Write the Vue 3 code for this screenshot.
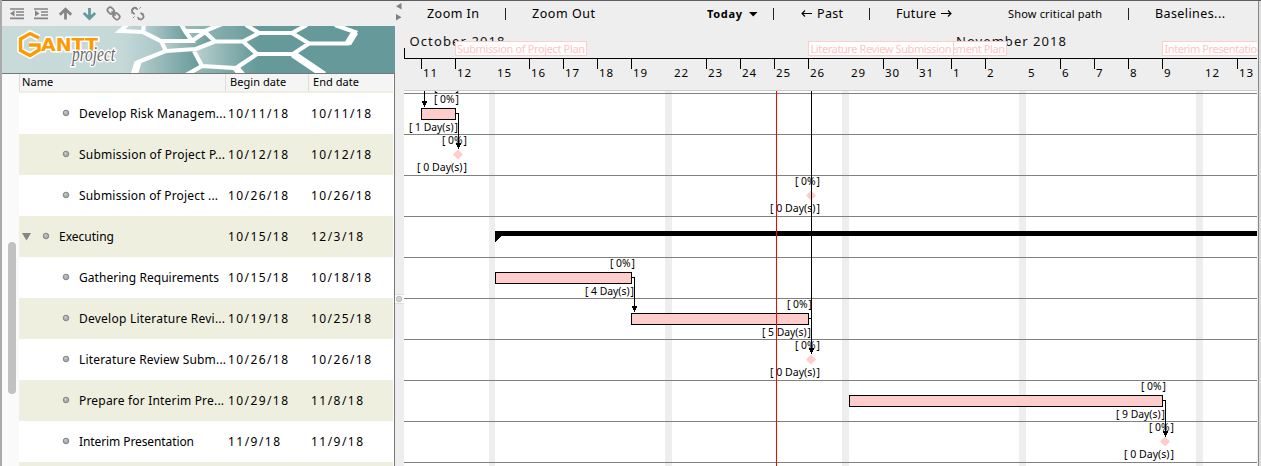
<script setup>
const rows = [
  { name: 'Develop Risk Managem...', w: 147, begin: '10/11/18', end: '10/11/18' },
  { name: 'Submission of Project P...', w: 146, begin: '10/12/18', end: '10/12/18' },
  { name: 'Submission of Project ...', w: 139, begin: '10/26/18', end: '10/26/18' },
  { name: 'Executing', w: 55, begin: '10/15/18', end: '12/3/18', parent: true },
  { name: 'Gathering Requirements', w: 140, begin: '10/15/18', end: '10/18/18' },
  { name: 'Develop Literature Revi...', w: 146, begin: '10/19/18', end: '10/25/18' },
  { name: 'Literature Review Subm...', w: 147, begin: '10/26/18', end: '10/26/18' },
  { name: 'Prepare for Interim Pre...', w: 145, begin: '10/29/18', end: '11/8/18' },
  { name: 'Interim Presentation', w: 115, begin: '11/9/18', end: '11/9/18' },
]
const dateWidth = (d) => (d.length === 8 ? 60 : 52)
const tools = [
  { t: 'Zoom In', w: 52, c: 'a' }, { sep: true, c: 'b' }, { t: 'Zoom Out', w: 63, c: 'c' },
  { t: 'Today', w: 35, c: 'd', bold: true }, { sep: true, c: 'e' }, { t: 'Past', w: 26, c: 'f', back: true },
  { sep: true, c: 'g' }, { t: 'Future', w: 40, c: 'h', next: true }, { t: 'Show critical path', w: 94, c: 'i', small: true },
  { sep: true, c: 'j' }, { t: 'Baselines...', w: 70, c: 'k' },
]
const days = [
  [421, 11], [455, 12], [495, 15, 1], [529, 16], [563, 17], [597, 18], [631, 19], [672, 22, 1],
  [706, 23], [740, 24], [774, 25], [808, 26], [849, 29, 1], [883, 30], [917, 31], [951, 1],
  [985, 2], [1026, 5, 1], [1060, 6], [1094, 7], [1128, 8], [1162, 9], [1203, 12, 1], [1237, 13],
]
const weekends = [[489, 6], [665, 7], [842, 7], [1019, 7], [1196, 7]]
const lines = Array.from({ length: 10 }, (_, i) => 93 + i * 41)
const bars = [[421, 108, 34], [495, 272, 136], [631, 313, 177], [849, 395, 313]]
const percents = [[434, 91], [434, 103], [442, 144], [795, 185], [610, 267], [787, 308], [795, 349], [1141, 390], [1149, 431]]
const durations = [
  [409, 131, 1, 49], [417, 171, 0, 50], [770, 212, 0, 50], [585, 295, 4, 49],
  [762, 336, 5, 49], [770, 376, 0, 50], [1116, 418, 9, 49], [1124, 458, 0, 50],
]
const diamonds = [[458, 154.5], [811, 195.5], [811, 359.5], [1165, 441.5]]
const arrows = [[424, 107], [458, 149], [634, 312], [811, 354], [1165, 437]]
const hexes = 'M128 24L120 31L143 32L161 41L166 51L138 62L134 75 M144 24L143 32 M161 41H192L185 31L181 24 M185 31H205L222 24 M192 41L205 32L215 41.5H243L259 33L246 25 M259 33H292L307 25 M292 33L309 43.5H348L355 32L335 25 M243 41.5L257 54H293L309 43.5 M257 54L236 68L202 66L194 51 M166 51L196 49L215 41.5 M202 66L186 75 M236 68L242 75 M293 54L324 75'
</script>

<template>
  <main class="app">
    <section class="left">
      <header class="icons">
        <svg width="150" height="24" viewBox="0 2 150 24">
          <g fill="none" stroke="#858585" stroke-width="1.7">
            <path d="M10 9H24M16 12H24M16 15H24M10 18.3H24M34 9H48M41 12H48M41 15H48M34 18.3H48" />
            <path d="M65.5 19.5V10M59.8 14.8L65.5 9.3L71.2 14.8" stroke-width="2.8" />
            <path d="M89.5 8V17.5M83.8 13L89.5 18.5L95.2 13" stroke="#669999" stroke-width="2.8" />
            <g transform="rotate(45 113.5 13.5)">
              <rect x="106" y="10.7" width="7" height="5.4" rx="2.7" /><rect x="114" y="10.7" width="7" height="5.4" rx="2.7" />
              <path d="M110.5 13.4H116.5" />
            </g>
            <g transform="rotate(45 137.5 13.5)">
              <path d="M135 10.7H133.5A2.7 2.7 0 0 0 133.5 16.1H136M139 10.7H142A2.7 2.7 0 0 1 142 16.1H140" />
            </g>
            <path d="M136 7V9M139.5 8.5L141 7M131 13H133M133 18L134.5 16.5M141 14H144M138.5 18V20M132.5 8.5L134 10" stroke-width="1" />
          </g>
          <path d="M14.5 10.3V16.5L10 13.4ZM35 10.3V16.5L39.5 13.4Z" fill="#858585" />
        </svg>
      </header>
      <svg class="banner" width="393" height="47" viewBox="2 26 393 47">
        <defs>
          <linearGradient id="teal"><stop offset="0" stop-color="#c8dada" /><stop offset=".3" stop-color="#c6d9d9" /><stop offset=".66" stop-color="#669999" /></linearGradient>
          <linearGradient id="cell"><stop offset="0" stop-color="#b8cfcf" /><stop offset="1" stop-color="#659898" /></linearGradient>
        </defs>
        <rect x="2" y="26" width="393" height="47" fill="url(#teal)" />
        <g fill="url(#cell)">
          <path d="M143 32L161 41H192L185 31L181 26H144Z" />
          <path d="M138 62L166 51L194 50L202 66L186 74H134Z" />
          <path d="M161 41L166 51L196 49L215 41.5L205 32L192 41Z" />
          <path d="M196 49L215 41.5H243L257 54L236 68L202 66Z" />
        </g>
        <path :d="hexes" fill="none" stroke="#fff" stroke-width="4.2" stroke-linejoin="miter" />
        <path d="M138 62L134 75M236 68L242 75M293 54L324 75M348 43.5L355 32" fill="none" stroke="#fff" stroke-width="7" />
        <path d="M39 38L30 33.5L20.5 39V50.5L30 55.5L39 50V45H29" fill="none" stroke="#fff" stroke-width="6.5" />
        <text class="brand" x="41" y="50.5" textLength="57" lengthAdjust="spacingAndGlyphs">ANTT</text>
        <path d="M39 38L30 33.5L20.5 39V50.5L30 55.5L39 50V45H29" fill="none" stroke="#ff9900" stroke-width="3.3" />
        <text class="project" x="72" y="61" textLength="43" lengthAdjust="spacingAndGlyphs">project</text>
      </svg>
      <div class="table">
        <div class="track"><i class="thumb"></i></div>
        <div class="grid">
          <div class="head"><span class="hn">Name</span><span>Begin date</span><span>End date</span></div>
          <div class="strip"></div>
          <div v-for="(r, i) in rows" :key="i" class="row">
            <svg width="374" height="41" viewBox="19 0 374 41">
              <path v-if="r.parent" d="M22 17H31L26.5 24.5Z" fill="#858585" />
              <circle :cx="r.parent ? 46 : 66" cy="20" r="2.8" fill="#aeaeb0" stroke="#85858a" stroke-width="1" />
              <circle :cx="r.parent ? 45.5 : 65.5" cy="19.2" r="1" fill="#d0d0d0" />
              <text :x="r.parent ? 59 : 79" y="25" :textLength="r.w">{{ r.name }}</text>
              <text x="228" y="25" :textLength="dateWidth(r.begin)">{{ r.begin }}</text>
              <text x="311" y="25" :textLength="dateWidth(r.end)">{{ r.end }}</text>
            </svg>
          </div>
          <div class="row"></div>
        </div>
      </div>
    </section>

    <div class="splitter">
      <svg width="9" height="466" viewBox="395 0 9 466">
        <path d="M401.5 3V9.5L396 6.2ZM396 14V20.5L401.5 17.2Z" fill="#808080" />
        <rect x="395" y="295" width="9" height="8" fill="#fafafa" />
        <path d="M395 294.5H404M395 303.5H404" stroke="#ddd" />
        <circle cx="399" cy="299" r="2.7" fill="#d4d4d4" stroke="#bbb" />
      </svg>
    </div>

    <section class="right">
      <nav class="bar">
        <span v-for="t in tools" :key="t.c" :class="['tool', t.c]">
          <i v-if="t.sep" class="sep"></i>
          <svg v-else :width="t.w + 18" height="25">
            <text :x="t.back ? 16 : 0" y="17" :textLength="t.w" :class="{ small: t.small, bold: t.bold }">{{ t.t }}</text>
            <path v-if="t.bold" d="M42 11H50.5L46.2 15.5Z" fill="#000" />
            <path v-if="t.back" d="M11 12.5H1M4 9.5L1 12.5L4 15.5" class="arrow" />
            <path v-if="t.next" d="M45 12.5H55M52 9.5L55 12.5L52 15.5" class="arrow" />
          </svg>
        </span>
      </nav>
      <svg class="chart" width="853" height="439" viewBox="404 27 853 439">
        <defs><clipPath id="body"><rect x="404" y="91" width="853" height="375" /></clipPath></defs>
        <rect x="404" y="91" width="853" height="375" fill="#fff" />
        <text class="month" x="409.5" y="46" textLength="95">October 2018</text>
        <text class="month" x="956" y="46" textLength="110">November 2018</text>
        <g shape-rendering="crispEdges" fill="#fff" stroke="#ffcccc">
          <rect x="455.5" y="41.5" width="131" height="14" />
          <rect x="808.5" y="41.5" width="198" height="14" />
        </g>
        <text class="tag" x="457" y="53" textLength="128">Submission of Project Plan</text>
        <text class="tag" x="950" y="53" textLength="55">ement Plan</text>
        <g shape-rendering="crispEdges" fill="#fff" stroke="#ffcccc">
          <rect x="808.5" y="41.5" width="145" height="14" />
          <rect x="1162.5" y="41.5" width="120" height="14" />
        </g>
        <text class="tag" x="810.5" y="53" textLength="141">Literature Review Submission</text>
        <text class="tag" x="1164.5" y="53" textLength="99">Interim Presentation</text>
        <g shape-rendering="crispEdges">
          <path d="M404.5 48V58.5H1257" fill="none" stroke="#000" />
          <template v-for="d in days" :key="d[0]">
            <rect v-if="!d[2]" :x="d[0]" y="58" width="1" height="11" />
          </template>
          <rect x="404" y="90" width="853" height="1" fill="#ccc" />
          <rect v-for="w in weekends" :key="w[0]" :x="w[0]" y="91" :width="w[1]" height="375" fill="#eee" />
          <rect v-for="y in lines" :key="y" x="404" :y="y" width="853" height="1" fill="#808080" />
        </g>
        <text v-for="d in days" :key="d[0]" class="day" :x="d[0] + 2" y="77" :textLength="d[1] > 9 ? 14 : 7">{{ d[1] }}</text>
        <g clip-path="url(#body)">
          <path v-for="(d, i) in diamonds" :key="i" :d="`M${d[0] - 5} ${d[1]}l5 -5l5 5l-5 5z`" fill="#ffcccc" />
          <g shape-rendering="crispEdges">
            <path d="M495 231H1257V236H501L495 242Z" />
            <rect v-for="b in bars" :key="b[0]" :x="b[0] + .5" :y="b[1] + .5" :width="b[2]" height="11" fill="#ffcccc" stroke="#000" />
          </g>
          <text v-for="(p, i) in percents" :key="i" class="label" :x="p[0]" :y="p[1]" textLength="25" lengthAdjust="spacingAndGlyphs">[ 0%&#8202;]</text>
          <text v-for="(p, i) in durations" :key="i" class="label" :x="p[0]" :y="p[1]" :textLength="p[3]" lengthAdjust="spacingAndGlyphs">[ {{ p[2] }} Day(s)&#8202;]</text>
          <g shape-rendering="crispEdges">
            <path d="M424.5 91V107M456 113.5H458.5V149M632 277.5H634.5V312M809 318.5H811.5M811.5 91V354M1163 400.5H1165.5V437" fill="none" stroke="#000" />
            <path v-for="a in arrows" :key="a[0]" :d="`M${a[0] - 2.5} ${a[1] - 6}h6l-3 6z`" />
            <rect x="776" y="91" width="1" height="375" fill="#f00" />
          </g>
        </g>
      </svg>
    </section>
    <aside class="edge"></aside>
  </main>
</template>

<style>
body { margin: 0; overflow: hidden; }
</style>

<style scoped>
.app { display: flex; box-sizing: border-box; width: 1261px; height: 466px; overflow: hidden; background: #eee; font-family: "Noto Sans", "Open Sans", sans-serif; font-size: 12px; box-shadow: inset 0 1px #5f5b5f; }
svg { display: block; }
.left { width: 393px; border-left: 2px solid #aaa; height: 466px; overflow: hidden; }
.icons { height: 24px; padding-top: 2px; }
.icons svg { margin-left: -2px; }
.brand { font: bold 17.5px "DejaVu Sans", sans-serif; fill: #ff9900; stroke: #fff; stroke-width: 3px; paint-order: stroke; }
.project { font: italic 20px "Liberation Serif", serif; fill: #666; stroke: #fff; stroke-width: 3px; paint-order: stroke; }
.table { display: flex; box-sizing: border-box; height: 393px; border: solid #777; border-width: 1px 1px 0 0; background: #fff; }
.track { width: 11px; padding: 168px 0 0 6px; background: #fafafa; overflow: hidden; }
.thumb { display: block; width: 8px; height: 152px; border-radius: 5px; background: #c1c1c1; }
.grid { width: 374px; }
.head { display: grid; grid-template-columns: 206px 83px 85px; height: 17px; background: #f5f5f5; font-size: 11px; line-height: 16px; }
.head span { padding-left: 4px; letter-spacing: .05px; white-space: nowrap; border-left: 1px solid #ddd; }
.head .hn { padding-left: 2px; }
.strip { height: 2px; background: #eeefdf; }
.row { height: 41px; background: #fff; }
.row:nth-child(even) { background: #eeefdf; }
.splitter { width: 9px; }
.right { width: 853px; }
.bar { display: grid; box-sizing: border-box; height: 27px; padding-top: 1px; grid-template-columns: 23px 78px 27px 175px 66px 28px 68px 27px 112px 120px 27px 102px; }
.a { grid-column: 2; }
.b { grid-column: 3; }
.tool { font-size: 12.5px; }
.sep { display: block; width: 1px; height: 12px; margin-top: 7px; background: #222; }
.arrow { fill: none; stroke: #000; stroke-width: 1.1; }
.small { font-size: 11px; }
.bold { font-size: 11px; font-weight: bold; }
.month { font: 13px "Noto Sans", sans-serif; fill: #111; }
.tag { font-size: 11px; fill: #ffc4c4; }
.day { font-size: 11.5px; }
.label { font-size: 10px; }
.edge { box-sizing: border-box; width: 4px; margin-top: 1px; border-left: 1px solid #eee; background: linear-gradient(90deg, #888 1px, #ddd 1px); }
</style>
